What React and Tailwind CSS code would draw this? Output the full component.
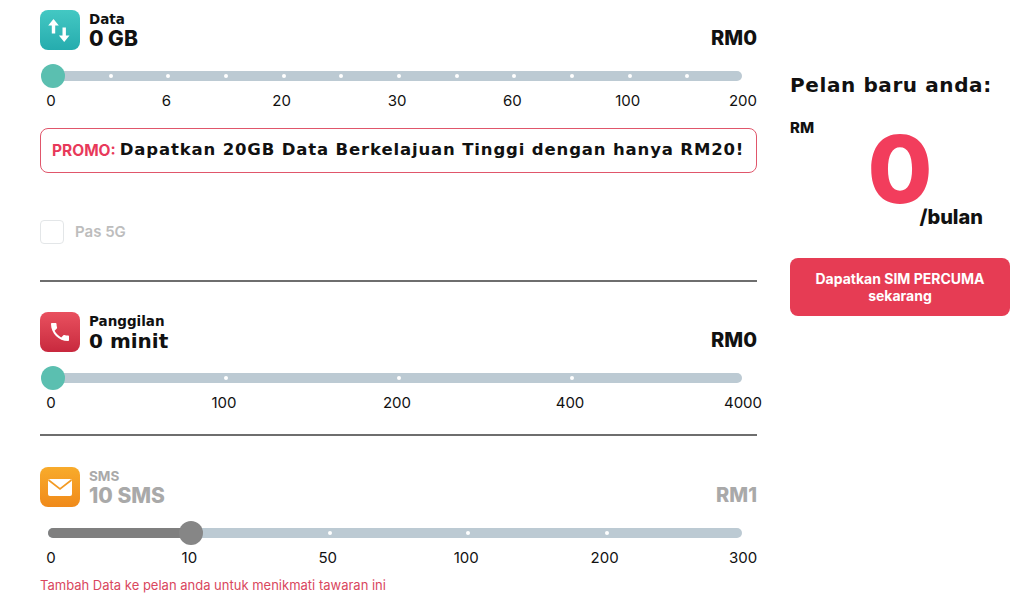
import React from "react";
import { MdPhone } from "react-icons/md";

const font = { fontFamily: "Inter, 'Noto Sans', sans-serif" };
const wide = { fontFamily: "'DejaVu Sans', Inter, sans-serif" };

// slider points: first value at 13px, last at 705px (relative to the column)
const START = 13;
const SPAN = 692;
const pos = (f) => `${START + f * SPAN}px`;

const DataIcon = () => (
  <svg viewBox="0 0 40 40" className="h-10 w-10">
    <polygon fill="#fff" points="13.5,9 8.2,15.4 11.8,15.4 11.8,23.5 15.2,23.5 15.2,15.4 18.8,15.4" />
    <polygon fill="#fff" points="24.2,32 18.9,25.6 22.5,25.6 22.5,17.5 25.9,17.5 25.9,25.6 29.5,25.6" />
  </svg>
);

const MailIcon = () => (
  <svg viewBox="0 0 40 40" className="h-10 w-10">
    <rect x="8" y="12" width="24" height="17" rx="2" fill="#fff" />
    <polyline points="8.5,13 20,22 31.5,13" fill="none" stroke="#f39a22" strokeWidth="1.6" />
  </svg>
);

const Slider = ({ labels, dots, value, fill }) => (
  <>
    <div className="relative h-6 mt-[14px]">
      <div className="absolute left-[8px] right-[15px] top-[7px] h-[10px] rounded-full bg-[#bccad3]" />
      {fill && (
        <div
          className="absolute left-[8px] top-[7px] h-[10px] rounded-full bg-[#7f7f7f]"
          style={{ width: `calc(${pos(value)} - 8px)` }}
        />
      )}
      {dots.map((d) => (
        <div
          key={d}
          className="absolute top-[10px] h-1 w-1 -ml-[2px] rounded-full bg-white"
          style={{ left: pos(d) }}
        />
      ))}
      <div
        className={`absolute top-0 h-6 w-6 -ml-3 rounded-full ${fill ? "bg-[#868686]" : "bg-[#5bbfb0]"}`}
        style={{ left: pos(value) }}
      />
    </div>
    <div className="relative h-5 mt-[3px] text-[15px] leading-5 text-[#111]">
      {labels.map((l, i) => (
        <span
          key={l}
          className="absolute top-0 -translate-x-1/2"
          style={{ left: `${START - 2 + (i / (labels.length - 1)) * SPAN}px` }}
        >
          {l}
        </span>
      ))}
    </div>
  </>
);

const Header = ({ icon, bg, title, value, price, muted, wideValue }) => (
  <div className="flex items-end justify-between">
    <div className="flex items-center gap-[9px]">
      <div className={`flex h-10 w-10 items-center justify-center rounded-lg ${bg}`}>{icon}</div>
      <div className={muted ? "text-[#a9a9a9]" : "text-[#111]"}>
        <div className="text-[13.5px] font-bold leading-[18px]" style={muted ? font : wide}>
          {title}
        </div>
        <div
          className={`font-extrabold leading-[22px] ${wideValue ? "text-[20px]" : "text-[21px]"}`}
          style={wideValue ? wide : font}
        >
          {value}
        </div>
      </div>
    </div>
    <div className={`text-[20px] font-extrabold leading-6 ${muted ? "text-[#a9a9a9]" : "text-[#111]"}`}>
      {price}
    </div>
  </div>
);

export default function App() {
  return (
    <div className="flex gap-[33px] bg-white pl-10 pt-[10px]" style={font}>
      <div className="w-[717px]">
        <Header
          icon={<DataIcon />}
          bg="bg-gradient-to-b from-[#43c8c3] to-[#25acae]"
          title="Data"
          value="0 GB"
          price="RM0"
        />
        <Slider
          labels={["0", "6", "20", "30", "60", "100", "200"]}
          dots={[1, 2, 3, 4, 5, 6, 7, 8, 9, 10, 11].map((k) => k / 12)}
          value={0}
        />
        <div className="mt-[17px] flex h-[45px] items-center rounded-lg border border-[#e0566b] pl-[11px] text-[15.5px] font-bold text-[#111]">
          <span className="text-[#e8395a]">PROMO:</span>
          <span className="ml-[4px] text-[16.5px] tracking-[0.85px]" style={wide}>
            Dapatkan 20GB Data Berkelajuan Tinggi dengan hanya RM20!
          </span>
        </div>
        <div className="mt-[47px] flex items-center gap-[11px]">
          <div className="h-6 w-6 rounded-sm border border-[#e3e6e8] bg-white" />
          <span className="text-[15px] font-semibold text-[#bdbdbd]">Pas 5G</span>
        </div>
        <div className="mt-[36px] h-[2px] bg-[#6e6e6e]" />

        <div className="mt-[30px]">
          <Header
            icon={<MdPhone className="h-6 w-6 text-white" />}
            bg="bg-gradient-to-b from-[#e9505f] to-[#c8283e]"
            title="Panggilan"
            value="0 minit"
            price="RM0"
            wideValue
          />
        </div>
        <Slider labels={["0", "100", "200", "400", "4000"]} dots={[0.25, 0.5, 0.75]} value={0} />
        <div className="mt-[21px] h-[2px] bg-[#6e6e6e]" />

        <div className="mt-[31px]">
          <Header
            icon={<MailIcon />}
            bg="bg-gradient-to-b from-[#f8ab2b] to-[#f08a1a]"
            title="SMS"
            value="10 SMS"
            price="RM1"
            muted
          />
        </div>
        <Slider
          labels={["0", "10", "50", "100", "200", "300"]}
          dots={[0.4, 0.6, 0.8]}
          value={0.2}
          fill
        />
        <p className="mt-[8px] text-[13px] leading-[18px] text-[#d9475e]">
          Tambah Data ke pelan anda untuk menikmati tawaran ini
        </p>
      </div>

      <div className="w-[220px] pt-[61px]">
        <h2 className="text-[20px] font-bold leading-7 tracking-[0.6px] text-[#111]" style={wide}>
          Pelan baru anda:
        </h2>
        <div className="mt-[19px] text-[15px] font-extrabold leading-5 text-[#111]">RM</div>
        <div className="-mt-[5px] text-center text-[94px] font-extrabold leading-[72px] text-[#f23d5c]">0</div>
        <div className="pr-[27px] text-right text-[20px] font-extrabold leading-6 text-[#111]">
          /bulan
        </div>
        <button className="mt-[29px] flex h-[58px] w-full flex-col items-center justify-center rounded-lg bg-[#e63c54] text-[14px] font-bold leading-[17px] text-white">
          <span>Dapatkan SIM PERCUMA</span>
          <span>sekarang</span>
        </button>
      </div>
    </div>
  );
}
